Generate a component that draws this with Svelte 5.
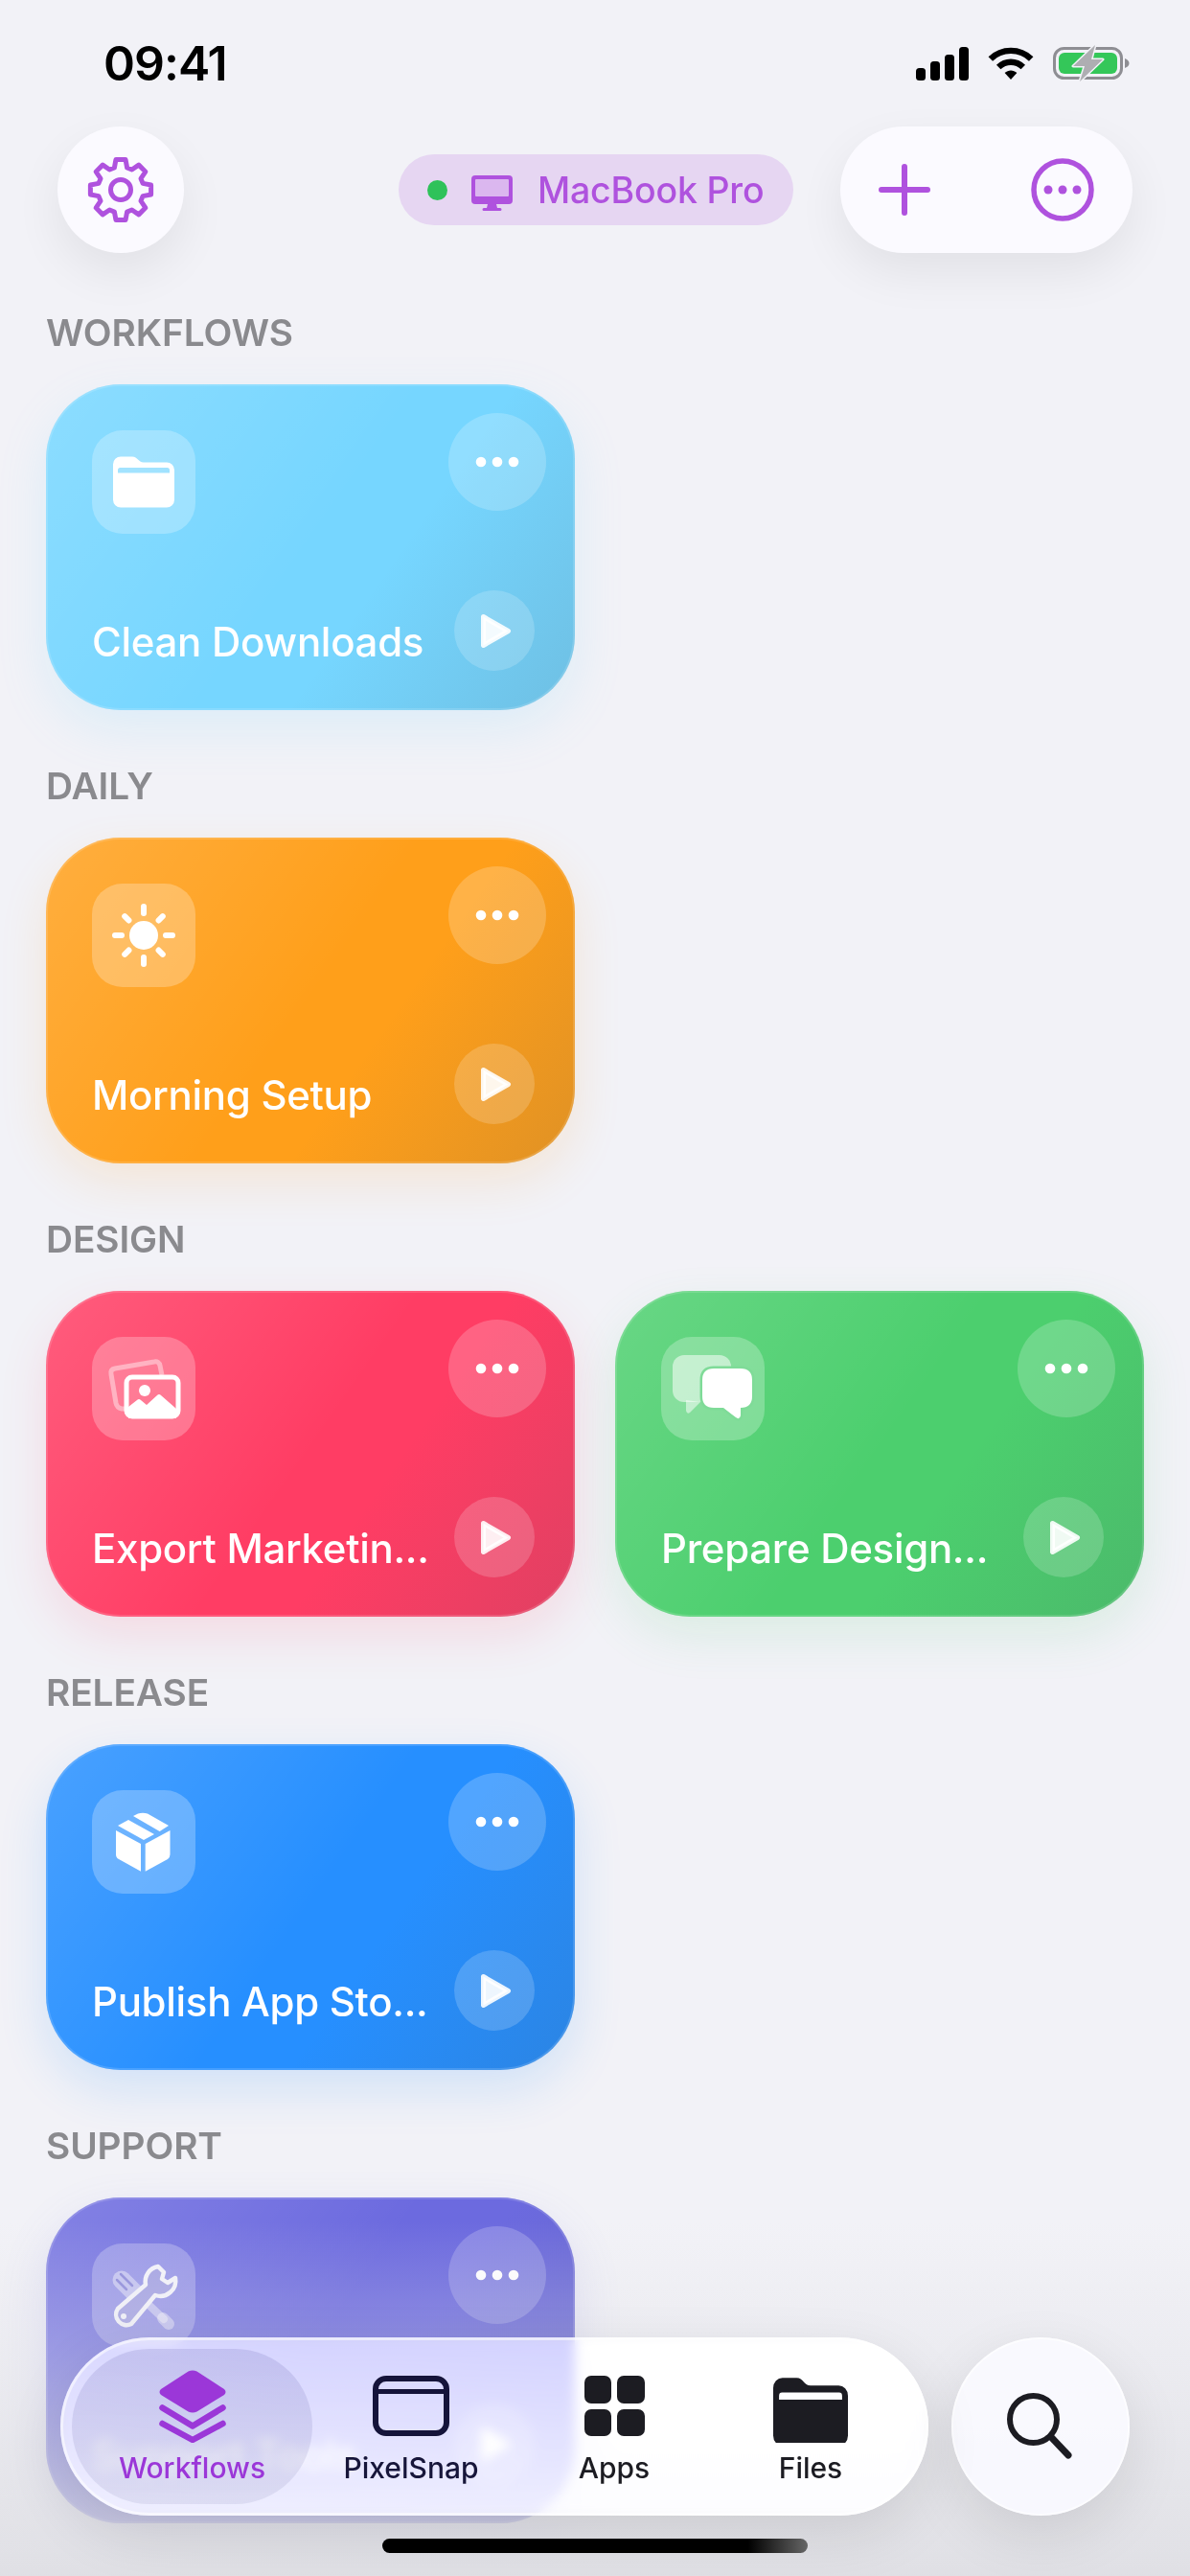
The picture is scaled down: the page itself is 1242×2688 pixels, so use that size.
<script>
  const gearPoints = [];
  for (let i = 0; i < 8; i++) {
    const a = i * 45 - 90;
    for (const [r, d] of [[24, -16], [32, -9], [32, 9], [24, 16]]) {
      const t = ((a + d) * Math.PI) / 180;
      gearPoints.push(`${(35 + r * Math.cos(t)).toFixed(2)} ${(35 + r * Math.sin(t)).toFixed(2)}`);
    }
  }
  const gearPath = 'M' + gearPoints.join('L') + 'Z';

  const sunRays = [0, 45, 90, 135, 180, 225, 270, 315];

  const folderPath =
    'M0 8a8 8 0 0 1 8-8h12c6 0 6 6 12 6h24a8 8 0 0 1 8 8v31a8 8 0 0 1-8 8H8a8 8 0 0 1-8-8zM5 17v-3a2.5 2.5 0 0 1 2.5-2.5h49A2.5 2.5 0 0 1 59 14v3z';

  const sections = [
    { label: 'WORKFLOWS', cards: [{ title: 'Clean Downloads', tone: 'sky', icon: 'folder' }] },
    { label: 'DAILY', cards: [{ title: 'Morning Setup', tone: 'orange', icon: 'sun' }] },
    {
      label: 'DESIGN',
      cards: [
        { title: 'Export Marketin...', tone: 'red', icon: 'photos' },
        { title: 'Prepare Design...', tone: 'green', icon: 'chat' }
      ]
    },
    { label: 'RELEASE', cards: [{ title: 'Publish App Sto...', tone: 'blue', icon: 'box' }] },
    { label: 'SUPPORT', cards: [{ title: 'Support Tools', tone: 'indigo', icon: 'tools' }] }
  ];
</script>

<div class="page">
  <div class="status">
    <span class="time">09:41</span>
    <div class="status-icons">
      <svg width="55" height="35" viewBox="0 0 55 35" fill="#000">
        <rect x="0" y="22" width="10" height="13" rx="3.5" />
        <rect x="15" y="15" width="10" height="20" rx="3.5" />
        <rect x="30" y="8" width="10" height="27" rx="3.5" />
        <rect x="45" y="0" width="10" height="35" rx="3.5" />
      </svg>
      <svg class="wifi" width="48" height="35" viewBox="0 0 48 35" fill="none" stroke="#000" stroke-width="6.4">
        <path d="M2.8 12.5C14.5 1 33.5 1 45.2 12.5" />
        <path d="M11.2 21C18.5 14 29.5 14 36.8 21" />
        <path d="M17.6 27 24 34l6.4-7C26.5 23.6 21.5 23.6 17.6 27Z" fill="#000" stroke="none" />
      </svg>
      <svg class="battery" width="80" height="38" viewBox="0 0 80 38">
        <rect x="1.5" y="3.5" width="70" height="31" rx="10" fill="none" stroke="#8e8e93" stroke-width="3" />
        <rect x="6" y="8" width="61" height="22" rx="6" fill="#34c759" />
        <path d="M75 14c3 1 4.500 3 4.500 5s-1.500 4-4.500 5z" fill="#8e8e93" />
        <path d="M44 0 21 22h12l-5 16 24-23H40z" fill="#aeaeb2" stroke="#f2f2f7" stroke-width="3" stroke-linejoin="round" paint-order="stroke" />
      </svg>
    </div>
  </div>

  <header class="header">
    <button class="round-btn" aria-label="Settings">
      <svg width="70" height="70" viewBox="0 0 70 70" fill="none" stroke="#af52de" stroke-width="5" stroke-linejoin="round">
        <path d={gearPath} />
        <circle cx="35" cy="35" r="10.500" />
      </svg>
    </button>
    <div class="device">
      <span class="dot"></span>
      <svg width="43" height="37" viewBox="0 0 43 37">
        <rect x="0" y="0" width="43" height="30" rx="4" fill="#af52de" />
        <rect x="4" y="4" width="35" height="18" rx="1" fill="#dbb7ef" />
        <path d="M17 30h9l1 4h3a1.500 1.500 0 0 1 0 3H13a1.500 1.500 0 0 1 0-3h3z" fill="#af52de" />
      </svg>
      <span class="device-name">MacBook Pro</span>
    </div>
    <div class="actions">
      <svg width="54" height="54" viewBox="0 0 54 54" stroke="#af52de" stroke-width="6" stroke-linecap="round">
        <path d="M27 3v48M3 27h48" />
      </svg>
      <svg width="66" height="66" viewBox="0 0 66 66">
        <circle cx="33" cy="33" r="30" fill="none" stroke="#af52de" stroke-width="5.500" />
        <circle cx="18" cy="33" r="4.500" fill="#af52de" />
        <circle cx="33" cy="33" r="4.500" fill="#af52de" />
        <circle cx="48" cy="33" r="4.500" fill="#af52de" />
      </svg>
    </div>
  </header>

  <main class="list">
    {#each sections as section}
      <section class="section">
        <h2 class="label">{section.label}</h2>
        <div class="row">
          {#each section.cards as card}
            <article class="card {card.tone}">
              <div class="card-top">
                <div class="tile">
                  <svg width="108" height="108" viewBox="0 0 108 108" fill="#fff">
                    {#if card.icon === 'folder'}
                      <path transform="translate(22 27.500)" fill-rule="evenodd" d={folderPath} />
                    {:else if card.icon === 'sun'}
                      <circle cx="54" cy="54" r="15" />
                      {#each sunRays as deg}
                        <line x1="54" y1={deg % 90 === 0 ? 31 : 32} x2="54" y2={deg % 90 === 0 ? 24 : 26} stroke="#fff" stroke-width="6" stroke-linecap="round" transform="rotate({deg} 54 54)" />
                      {/each}
                    {:else if card.icon === 'photos'}
                      <path d="M73 40 71 30Q70 25 65 26L24 33Q19 34 20 39L25 69Q26 74 31 75L34 75" fill="none" stroke="#fff" stroke-opacity=".42" stroke-width="5" />
                      <rect x="36" y="42" width="54" height="41" rx="6" fill="none" stroke="#fff" stroke-width="5" />
                      <circle cx="55" cy="56" r="6" />
                      <path d="M38 73 47 66Q49 64 51 66L57 71 68 61Q70 59 72 61L88 75V85H38Z" />
                    {:else if card.icon === 'chat'}
                      <g fill-opacity=".52">
                        <rect x="12" y="19" width="61" height="49" rx="12" />
                        <path d="M26 66v11q1 4 4 2l11-11z" />
                      </g>
                      <g stroke="#7fdb98" stroke-width="5" paint-order="stroke">
                        <path d="M55 33H83Q95 33 95 45V62Q95 74 83 74V82Q82 87 78 84L65 74H55Q43 74 43 62V45Q43 33 55 33Z" />
                      </g>
                    {:else if card.icon === 'box'}
                      <path d="M25 42 51 56V84.700L28 72Q25 70.500 25 67Z" />
                      <path d="M81.500 42 55.700 56V84.700L79 72Q81.500 70.500 81.500 67Z" />
                      <path d="M27 37 38 31 65 46 54 52Z" />
                      <path d="M43 27 48 24.500Q53 23 58 24.500L80 37 70.600 43Z" />
                    {:else if card.icon === 'tools'}
                      <g fill="none" stroke="#fff" stroke-opacity=".42" stroke-linecap="round">
                        <path d="M31 38 50 57" stroke-width="19" />
                        <path d="M55 60 75 79" stroke-width="8" />
                        <path d="M74 78 80 84" stroke-width="12" />
                      </g>
                      <path d="M30 32 42 44M26 38 36 48" fill="none" stroke="#8f8cdc" stroke-width="2.500" stroke-linecap="round" />
                      <path d="M69 24A16 16 0 0 0 56 43L27 68A11 11 0 0 0 41 84L66 54A16 16 0 0 0 87 36L79 41 73 37 75 30Z" fill="#a6a4e4" stroke="#f4f4fb" stroke-width="4.500" stroke-linejoin="round" />
                      <circle cx="33" cy="76" r="3" fill="#f4f4fb" />
                    {/if}
                  </svg>
                </div>
                <button class="more" aria-label="More">
                  <svg width="46" height="12" viewBox="0 0 46 12" fill="#fff">
                    <circle cx="6" cy="6" r="5.300" />
                    <circle cx="23" cy="6" r="5.300" />
                    <circle cx="40" cy="6" r="5.300" />
                  </svg>
                </button>
              </div>
              <div class="card-bottom">
                <h3 class="title">{card.title}</h3>
                <button class="play" aria-label="Run">
                  <svg width="84" height="84" viewBox="0 0 84 84">
                    <path d="M30.500 27.500 56.500 42.500 30.500 57.500Z" fill="#fff" fill-opacity=".9" stroke="#fff" stroke-opacity=".9" stroke-width="5" stroke-linejoin="round" />
                  </svg>
                </button>
              </div>
            </article>
          {/each}
        </div>
      </section>
    {/each}
  </main>

  <div class="fade"></div>

  <nav class="dock">
    <div class="tabs">
      <div class="tab active">
        <svg width="70" height="76" viewBox="0 0 70 76">
          <path d="M30.500 1.500 2 20Q-1 23 2 26L30.500 43.500Q35 45.500 39.500 43.500L68 26Q71 23 68 20L39.500 1.500Q35-.5 30.500 1.500Z" fill="#9b37d8" />
          <path d="M3.500 39.500 35 58.500 66.500 39.500M3.500 56 35 73 66.500 56" fill="none" stroke="#9b37d8" stroke-width="6.500" stroke-linecap="round" stroke-linejoin="round" />
        </svg>
        <span class="tab-label">Workflows</span>
      </div>
      <div class="tab">
        <svg width="80" height="76" viewBox="0 0 80 76" fill="none" stroke="#15143a" stroke-width="6">
          <rect x="3" y="9" width="74" height="57" rx="11" />
          <path d="M3 22.500h74" stroke-width="5" />
        </svg>
        <span class="tab-label navy">PixelSnap</span>
      </div>
      <div class="tab">
        <div class="apps-icon">
          <span></span><span></span><span></span><span></span>
        </div>
        <span class="tab-label">Apps</span>
      </div>
      <div class="tab">
        <svg width="78" height="76" viewBox="0 0 64 62" fill="#1c1c22">
          <path transform="translate(0 6.500) scale(1 1.100)" fill-rule="evenodd" d={folderPath} />
        </svg>
        <span class="tab-label">Files</span>
      </div>
    </div>
    <button class="search" aria-label="Search">
      <svg width="70" height="70" viewBox="0 0 70 70" fill="none" stroke="#1c1c22" stroke-linecap="round">
        <circle cx="27.500" cy="27.500" r="24.500" stroke-width="6" />
        <path d="M46 46 64 65" stroke-width="7" />
      </svg>
    </button>
  </nav>

  <div class="home"></div>
</div>

<style>
  :global(body) {
    margin: 0;
    background: #f2f2f7;
  }

  .page {
    position: relative;
    width: 1242px;
    height: 2688px;
    overflow: hidden;
    background: #f2f2f7;
    font-family: Inter, "Noto Sans", sans-serif;
  }

  button {
    border: 0;
    padding: 0;
    margin: 0;
    font: inherit;
    display: flex;
    align-items: center;
    justify-content: center;
  }

  svg {
    display: block;
    flex: none;
  }

  .status {
    height: 132px;
    padding: 0 63px 0 108px;
    display: flex;
    align-items: center;
    justify-content: space-between;
    box-sizing: border-box;
  }

  .time {
    font-size: 50px;
    font-weight: 600;
    letter-spacing: -1px;
    color: #000;
  }

  .status-icons {
    display: flex;
    align-items: center;
  }

  .wifi {
    margin-left: 20px;
  }

  .battery {
    margin-left: 20px;
  }

  .header {
    height: 132px;
    padding: 0 60px;
    display: flex;
    align-items: center;
  }

  .round-btn {
    width: 132px;
    height: 132px;
    border-radius: 50%;
    background: #fbfaff;
    box-shadow: 0 20px 50px rgba(0, 0, 0, 0.07);
  }

  .device {
    margin-left: 224px;
    width: 412px;
    height: 74px;
    box-sizing: border-box;
    padding-left: 30px;
    border-radius: 37px;
    background: #e6d6f2;
    display: flex;
    align-items: center;
  }

  .dot {
    width: 21px;
    height: 21px;
    border-radius: 50%;
    background: #2fc25a;
    margin-right: 25px;
  }

  .device svg {
    margin-top: 6px;
  }

  .device-name {
    margin-left: 26px;
    font-size: 37.5px;
    font-weight: 500;
    letter-spacing: -0.2px;
    color: #af52de;
    white-space: nowrap;
  }

  .actions {
    margin-left: auto;
    width: 305px;
    height: 132px;
    box-sizing: border-box;
    padding: 0 40px;
    border-radius: 66px;
    background: #fbfaff;
    box-shadow: 0 20px 50px rgba(0, 0, 0, 0.07);
    display: flex;
    align-items: center;
    justify-content: space-between;
  }

  .list {
    margin-top: 4px;
  }

  .section {
    height: 473px;
    padding: 56px 48px 0;
    box-sizing: border-box;
  }

  .label {
    margin: 0 0 31px;
    height: 46px;
    line-height: 46px;
    font-size: 38.8px;
    font-weight: 600;
    letter-spacing: -0.1px;
    color: #8a8a8e;
  }

  .row {
    display: flex;
    gap: 42px;
  }

  .card {
    --base: #76d6ff;
    --glow: rgba(118, 214, 255, 0.16);
    width: 552px;
    height: 340px;
    box-sizing: border-box;
    padding: 30px 30px 41px 48px;
    border-radius: 78px;
    display: flex;
    flex-direction: column;
    justify-content: space-between;
    background:
      linear-gradient(125deg, rgba(255, 255, 255, 0.16) 0%, rgba(255, 255, 255, 0) 50%, rgba(70, 80, 90, 0) 62%, rgba(70, 80, 90, 0.17) 100%),
      var(--base);
    box-shadow:
      inset 0 0 0 2px rgba(255, 255, 255, 0.14),
      0 20px 50px var(--glow);
  }

  .sky {
    --base: #76d6ff;
    --glow: rgba(118, 214, 255, 0.17);
  }

  .orange {
    --base: #ff9f1a;
    --glow: rgba(255, 159, 26, 0.14);
  }

  .red {
    --base: #ff3d64;
    --glow: rgba(255, 61, 100, 0.13);
  }

  .green {
    --base: #4ccf6e;
    --glow: rgba(76, 207, 110, 0.14);
  }

  .blue {
    --base: #268fff;
    --glow: rgba(38, 143, 255, 0.16);
  }

  .indigo {
    --base: #6c6adf;
    --glow: rgba(108, 106, 223, 0.16);
  }

  .card-top {
    display: flex;
    justify-content: space-between;
    align-items: flex-start;
  }

  .tile {
    margin-top: 18px;
    width: 108px;
    height: 108px;
    border-radius: 32px;
    background: rgba(255, 255, 255, 0.25);
  }

  .more {
    width: 102px;
    height: 102px;
    border-radius: 50%;
    background: rgba(255, 255, 255, 0.2);
  }

  .card-bottom {
    display: flex;
    align-items: center;
    justify-content: space-between;
    padding-right: 12px;
  }

  .title {
    margin: 22px 0 0;
    font-size: 42px;
    font-weight: 500;
    letter-spacing: -0.3px;
    color: #fff;
    white-space: nowrap;
  }

  .play {
    width: 84px;
    height: 84px;
    border-radius: 50%;
    background: rgba(255, 255, 255, 0.18);
  }

  .fade {
    position: absolute;
    left: 0;
    right: 0;
    bottom: 0;
    height: 370px;
    background: linear-gradient(
      180deg,
      rgba(223, 223, 228, 0) 0%,
      rgba(223, 223, 228, 0.3) 35%,
      rgba(223, 223, 228, 0.82) 88%,
      rgba(223, 223, 228, 0.96) 100%
    );
  }

  .dock {
    position: absolute;
    left: 63px;
    top: 2439px;
    display: flex;
    gap: 24px;
  }

  .tabs {
    position: relative;
    width: 906px;
    height: 186px;
    box-sizing: border-box;
    padding: 12px 0 12px 12px;
    border-radius: 93px;
    display: grid;
    grid-template-columns: 251px 206px 218px 192px;
    overflow: hidden;
    background: rgba(255, 255, 255, 0.6);
    backdrop-filter: blur(6px) saturate(2.1) brightness(1.1);
    box-shadow:
      inset 0 0 0 3px rgba(255, 255, 255, 0.55),
      0 20px 60px rgba(0, 0, 0, 0.1);
  }

  .tab {
    position: relative;
    height: 162px;
    box-sizing: border-box;
    padding-top: 22px;
    display: flex;
    flex-direction: column;
    align-items: center;
    border-radius: 81px;
  }

  .active {
    background: linear-gradient(180deg, rgba(90, 85, 170, 0.17), rgba(110, 110, 160, 0.13));
  }

  .tab-label {
    margin-top: 8px;
    line-height: 36px;
    font-size: 30px;
    font-weight: 500;
    color: #1c1c22;
  }

  .navy {
    color: #17163a;
  }

  .active .tab-label {
    color: #9b37d8;
  }

  .apps-icon {
    width: 63px;
    height: 76px;
    box-sizing: border-box;
    padding: 6px 0 7px;
    display: grid;
    grid-template-columns: 1fr 1fr;
    gap: 6px;
  }

  .apps-icon span {
    border-radius: 7px;
    background: #1c1c22;
  }

  .search {
    width: 186px;
    height: 186px;
    border-radius: 50%;
    background: rgba(250, 250, 255, 0.92);
    box-shadow:
      inset 0 0 0 2px rgba(255, 255, 255, 0.6),
      0 20px 60px rgba(0, 0, 0, 0.1);
  }

  .home {
    position: absolute;
    left: 399px;
    top: 2649px;
    width: 444px;
    height: 15px;
    border-radius: 8px;
    background: linear-gradient(90deg, #000 0, #000 86%, #666 100%);
  }
</style>
